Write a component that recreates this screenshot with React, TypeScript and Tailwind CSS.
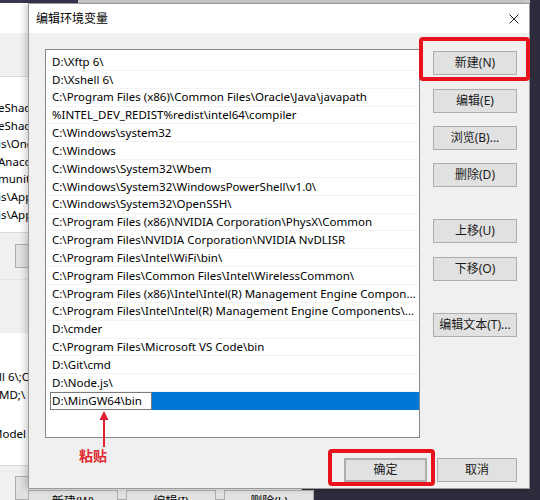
import React from "react";

const PATHS = [
  "D:\\Xftp 6\\",
  "D:\\Xshell 6\\",
  "C:\\Program Files (x86)\\Common Files\\Oracle\\Java\\javapath",
  "%INTEL_DEV_REDIST%redist\\intel64\\compiler",
  "C:\\Windows\\system32",
  "C:\\Windows",
  "C:\\Windows\\System32\\Wbem",
  "C:\\Windows\\System32\\WindowsPowerShell\\v1.0\\",
  "C:\\Windows\\System32\\OpenSSH\\",
  "C:\\Program Files (x86)\\NVIDIA Corporation\\PhysX\\Common",
  "C:\\Program Files\\NVIDIA Corporation\\NVIDIA NvDLISR",
  "C:\\Program Files\\Intel\\WiFi\\bin\\",
  "C:\\Program Files\\Common Files\\Intel\\WirelessCommon\\",
  "C:\\Program Files (x86)\\Intel\\Intel(R) Management Engine Compon...",
  "C:\\Program Files\\Intel\\Intel(R) Management Engine Components\\...",
  "D:\\cmder",
  "C:\\Program Files\\Microsoft VS Code\\bin",
  "D:\\Git\\cmd",
  "D:\\Node.js\\",
];

// rows of the parent "环境变量" window peeking out on the left
const BEHIND_TOP = ["eShadow", "eShadow", "is\\OneDrive", "Anaconda3", "munity", "is\\AppData", "is\\AppData"];

function Btn({ children, className = "" }: { children: React.ReactNode; className?: string }) {
  return (
    <div
      className={`flex h-[24px] items-center justify-center border border-[#adadad] bg-[#e1e1e1] text-[12px] text-[#1a1a1a] ${className}`}
    >
      {children}
    </div>
  );
}

export default function App() {
  return (
    <div className="relative h-[500px] w-[540px] overflow-hidden bg-[#2e2b3d] font-['Noto_Sans','Noto_Sans_CJK_SC',sans-serif] text-[11.5px] leading-none text-black">
      {/* strip of another window along the top */}
      <div className="absolute left-0 top-0 flex h-[3px] w-[530px]">
        <div className="w-[78px] bg-[#3a3550]" />
        <div className="flex-1 bg-[#cdcdcd]" />
      </div>

      {/* parent window behind the dialog */}
      <div className="absolute left-0 top-[3px] flex h-[497px] w-[302px] flex-col bg-[#f0f0f0]">
        <div className="h-[30px] bg-white" />
        <div className="h-[45px] border-b border-[#d9d9d9]" />
        <div className="flex h-[157px] flex-col bg-white pt-[22px]">
          {BEHIND_TOP.map((t, i) => (
            <div key={i} className="-ml-[2px] flex h-[17.8px] items-center whitespace-nowrap">
              {t}
            </div>
          ))}
        </div>
        <div className="h-[1px] bg-[#d9d9d9]" />
        <div className="h-[46px] pl-[15px] pt-[11px]">
          <div className="h-[24px] border border-[#adadad] bg-[#e1e1e1]" />
        </div>
        <div className="h-[1px] bg-[#e3e3e3]" />
        <div className="h-[54px]" />
        <div className="flex h-[133px] flex-col bg-white pt-[35px]">
          <div className="-ml-[1px] flex h-[17.8px] items-center whitespace-nowrap">ll 6\;C:\</div>
          <div className="-ml-[1px] flex h-[17.8px] items-center whitespace-nowrap">MD;\</div>
          <div className="h-[21px]" />
          <div className="-ml-[8px] flex h-[17.8px] items-center whitespace-nowrap">Model</div>
        </div>
        <div className="h-[1px] bg-[#d9d9d9]" />
        <div className="pl-[15px] pt-[10px]">
          <div className="h-[24px] border border-[#adadad] bg-[#e1e1e1]" />
        </div>
        {/* tops of the parent's buttons below the dialog */}
        <div className="absolute left-[28px] top-[487px] flex gap-[8px] text-[12px]">
          <div className="flex h-[24px] w-[90px] items-start justify-center border border-[#adadad] bg-[#e1e1e1] pt-[5px]">新建(W)</div>
          <div className="flex h-[24px] w-[90px] items-start justify-center border border-[#adadad] bg-[#e1e1e1] pt-[5px]">编辑(I)</div>
          <div className="flex h-[24px] w-[90px] items-start justify-center border border-[#adadad] bg-[#e1e1e1] pt-[5px]">删除(L)</div>
        </div>
      </div>

      {/* 编辑环境变量 dialog */}
      <div className="absolute left-[28px] top-[3px] flex h-[486px] w-[502px] flex-col border border-[#9a9a9a] shadow-[-3px_0_6px_rgba(0,0,0,0.18)]">
        <div className="flex h-[29px] items-center justify-between bg-white pl-[7px] pr-[9px]">
          <span className="text-[12px]">编辑环境变量</span>
          <svg width="10" height="10" viewBox="0 0 10 10" className="mr-[1px]">
            <path d="M0.5 0.5 L9.5 9.5 M9.5 0.5 L0.5 9.5" stroke="#222" strokeWidth="1" />
          </svg>
        </div>

        <div className="flex flex-1 flex-col bg-[#f0f0f0] pl-[16px] pr-[12px] pt-[16px]">
          <div className="flex gap-[13px]">
            {/* path list */}
            <div className="flex h-[389px] w-[375px] flex-col overflow-hidden border border-[#828790] bg-white pt-[3px]">
              {PATHS.map((p) => (
                <div
                  key={p}
                  className="flex h-[17.85px] shrink-0 items-center overflow-hidden whitespace-nowrap border-b border-[#f3f3f3] pl-[6px]"
                >
                  {p}
                </div>
              ))}
              <div className="flex h-[17.85px] shrink-0 items-stretch pl-[4px]">
                <div className="flex w-[102px] items-center border border-[#7a7a7a] bg-white pl-[1px]">D:\MinGW64\bin</div>
                <div className="flex-1 bg-[#0078d7]" />
              </div>
            </div>

            {/* action buttons */}
            <div className="flex w-[84px] flex-col">
              <Btn className="mt-[2px]">新建(N)</Btn>
              <Btn className="mt-[14px]">编辑(E)</Btn>
              <Btn className="mt-[13px]">浏览(B)...</Btn>
              <Btn className="mt-[13px]">删除(D)</Btn>
              <Btn className="mt-[32px]">上移(U)</Btn>
              <Btn className="mt-[14px]">下移(O)</Btn>
              <Btn className="mt-[32px]">编辑文本(T)...</Btn>
            </div>
          </div>

          <div className="mt-[20px] flex justify-end gap-[10px]">
            <Btn className="w-[83px] border-2 border-[#0078d7]">确定</Btn>
            <Btn className="w-[80px]">取消</Btn>
          </div>
        </div>
      </div>

      {/* annotations */}
      <div className="absolute left-[419px] top-[37px] h-[44px] w-[111px] rounded-[4px] border-[4px] border-[#e8121c]" />
      <div className="absolute left-[328px] top-[449px] h-[37px] w-[107px] rounded-[4px] border-[4px] border-[#e8121c]" />
      <svg className="absolute left-[99px] top-[411px]" width="10" height="36" viewBox="0 0 10 36">
        <path d="M5 0 L9.5 9 L0.5 9 Z" fill="#e0202a" />
        <rect x="4" y="8" width="2" height="28" fill="#e0202a" />
      </svg>
      <div className="absolute left-[79px] top-[449px] text-[14px] font-bold text-[#e0282e]">粘贴</div>
    </div>
  );
}
